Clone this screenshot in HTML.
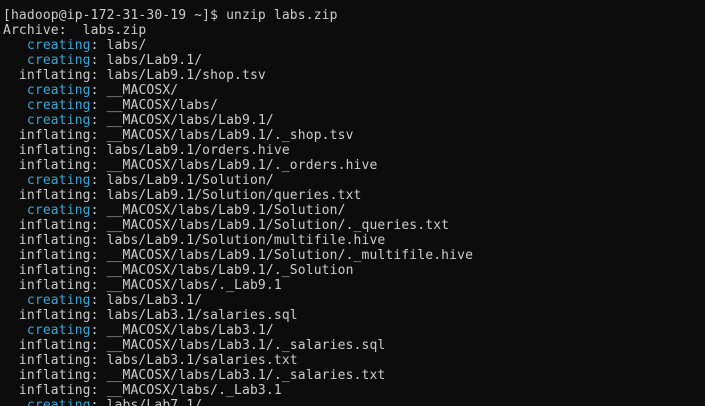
<!DOCTYPE html>
<html><head><style>
html,body{margin:0;padding:0;background:#0c0c0c;width:705px;height:406px;overflow:hidden}
pre{margin:0;padding:8px 0 0 3px;font-family:"DejaVu Sans Mono","Liberation Mono",monospace;font-size:13px;letter-spacing:0.14px;line-height:15px;color:#cccccc}
.c{color:#38a8d8}
</style></head><body><pre>[hadoop@ip-172-31-30-19 ~]$ unzip labs.zip
Archive:  labs.zip
   <span class="c">creating</span>: labs/
   <span class="c">creating</span>: labs/Lab9.1/
  inflating: labs/Lab9.1/shop.tsv
   <span class="c">creating</span>: __MACOSX/
   <span class="c">creating</span>: __MACOSX/labs/
   <span class="c">creating</span>: __MACOSX/labs/Lab9.1/
  inflating: __MACOSX/labs/Lab9.1/._shop.tsv
  inflating: labs/Lab9.1/orders.hive
  inflating: __MACOSX/labs/Lab9.1/._orders.hive
   <span class="c">creating</span>: labs/Lab9.1/Solution/
  inflating: labs/Lab9.1/Solution/queries.txt
   <span class="c">creating</span>: __MACOSX/labs/Lab9.1/Solution/
  inflating: __MACOSX/labs/Lab9.1/Solution/._queries.txt
  inflating: labs/Lab9.1/Solution/multifile.hive
  inflating: __MACOSX/labs/Lab9.1/Solution/._multifile.hive
  inflating: __MACOSX/labs/Lab9.1/._Solution
  inflating: __MACOSX/labs/._Lab9.1
   <span class="c">creating</span>: labs/Lab3.1/
  inflating: labs/Lab3.1/salaries.sql
   <span class="c">creating</span>: __MACOSX/labs/Lab3.1/
  inflating: __MACOSX/labs/Lab3.1/._salaries.sql
  inflating: labs/Lab3.1/salaries.txt
  inflating: __MACOSX/labs/Lab3.1/._salaries.txt
  inflating: __MACOSX/labs/._Lab3.1
   <span class="c">creating</span>: labs/Lab7.1/
</pre></body></html>
